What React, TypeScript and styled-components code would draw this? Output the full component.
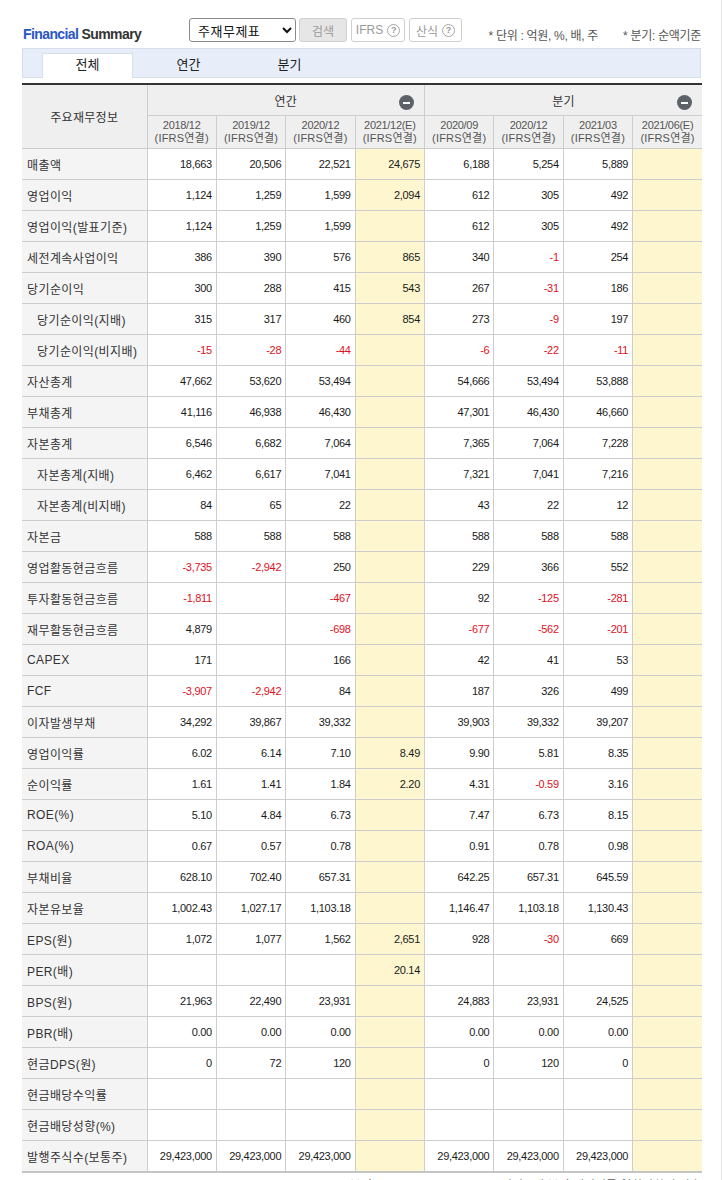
import React from 'react';
import styled, { createGlobalStyle } from 'styled-components';

const GlobalStyle = createGlobalStyle`
  html, body { margin: 0; padding: 0; background: #fff; }
  body { font-family: "Liberation Sans", "Noto Sans CJK KR", sans-serif; color: #333; }
`;

type Row = { label: string; indent?: boolean; values: string[] };

const rows: Row[] = [
  { label: '매출액', values: ['18,663', '20,506', '22,521', '24,675', '6,188', '5,254', '5,889', ''] },
  { label: '영업이익', values: ['1,124', '1,259', '1,599', '2,094', '612', '305', '492', ''] },
  { label: '영업이익(발표기준)', values: ['1,124', '1,259', '1,599', '', '612', '305', '492', ''] },
  { label: '세전계속사업이익', values: ['386', '390', '576', '865', '340', '-1', '254', ''] },
  { label: '당기순이익', values: ['300', '288', '415', '543', '267', '-31', '186', ''] },
  { label: '당기순이익(지배)', indent: true, values: ['315', '317', '460', '854', '273', '-9', '197', ''] },
  { label: '당기순이익(비지배)', indent: true, values: ['-15', '-28', '-44', '', '-6', '-22', '-11', ''] },
  { label: '자산총계', values: ['47,662', '53,620', '53,494', '', '54,666', '53,494', '53,888', ''] },
  { label: '부채총계', values: ['41,116', '46,938', '46,430', '', '47,301', '46,430', '46,660', ''] },
  { label: '자본총계', values: ['6,546', '6,682', '7,064', '', '7,365', '7,064', '7,228', ''] },
  { label: '자본총계(지배)', indent: true, values: ['6,462', '6,617', '7,041', '', '7,321', '7,041', '7,216', ''] },
  { label: '자본총계(비지배)', indent: true, values: ['84', '65', '22', '', '43', '22', '12', ''] },
  { label: '자본금', values: ['588', '588', '588', '', '588', '588', '588', ''] },
  { label: '영업활동현금흐름', values: ['-3,735', '-2,942', '250', '', '229', '366', '552', ''] },
  { label: '투자활동현금흐름', values: ['-1,811', '', '-467', '', '92', '-125', '-281', ''] },
  { label: '재무활동현금흐름', values: ['4,879', '', '-698', '', '-677', '-562', '-201', ''] },
  { label: 'CAPEX', values: ['171', '', '166', '', '42', '41', '53', ''] },
  { label: 'FCF', values: ['-3,907', '-2,942', '84', '', '187', '326', '499', ''] },
  { label: '이자발생부채', values: ['34,292', '39,867', '39,332', '', '39,903', '39,332', '39,207', ''] },
  { label: '영업이익률', values: ['6.02', '6.14', '7.10', '8.49', '9.90', '5.81', '8.35', ''] },
  { label: '순이익률', values: ['1.61', '1.41', '1.84', '2.20', '4.31', '-0.59', '3.16', ''] },
  { label: 'ROE(%)', values: ['5.10', '4.84', '6.73', '', '7.47', '6.73', '8.15', ''] },
  { label: 'ROA(%)', values: ['0.67', '0.57', '0.78', '', '0.91', '0.78', '0.98', ''] },
  { label: '부채비율', values: ['628.10', '702.40', '657.31', '', '642.25', '657.31', '645.59', ''] },
  { label: '자본유보율', values: ['1,002.43', '1,027.17', '1,103.18', '', '1,146.47', '1,103.18', '1,130.43', ''] },
  { label: 'EPS(원)', values: ['1,072', '1,077', '1,562', '2,651', '928', '-30', '669', ''] },
  { label: 'PER(배)', values: ['', '', '', '20.14', '', '', '', ''] },
  { label: 'BPS(원)', values: ['21,963', '22,490', '23,931', '', '24,883', '23,931', '24,525', ''] },
  { label: 'PBR(배)', values: ['0.00', '0.00', '0.00', '', '0.00', '0.00', '0.00', ''] },
  { label: '현금DPS(원)', values: ['0', '72', '120', '', '0', '120', '0', ''] },
  { label: '현금배당수익률', values: ['', '', '', '', '', '', '', ''] },
  { label: '현금배당성향(%)', values: ['', '', '', '', '', '', '', ''] },
  { label: '발행주식수(보통주)', values: ['29,423,000', '29,423,000', '29,423,000', '', '29,423,000', '29,423,000', '29,423,000', ''] },
];

const periods = [
  { date: '2018/12', est: false },
  { date: '2019/12', est: false },
  { date: '2020/12', est: false },
  { date: '2021/12(E)', est: true },
  { date: '2020/09', est: false },
  { date: '2020/12', est: false },
  { date: '2021/03', est: false },
  { date: '2021/06(E)', est: true },
];

const Page = styled.div`
  width: 722px;
  min-height: 100vh;
  box-sizing: border-box;
  border-right: 1px solid #e6e6e6;
  padding: 0 20px 0 22px;
`;

const TopBar = styled.div`
  display: flex;
  align-items: flex-start;
  height: 48px;
  padding-top: 18px;
  box-sizing: border-box;
`;

const Title = styled.h2`
  flex: 0 0 166px;
  margin: 8px 0 0 1px;
  font-size: 14px;
  line-height: 16px;
  font-weight: bold;
  letter-spacing: -0.6px;
  color: #333;
  span { color: #2a56c6; }
`;

const Select = styled.select`
  width: 107px;
  height: 24px;
  border: 1px solid #8a8a8a;
  border-radius: 3px;
  background: #fff;
  font-family: "Noto Sans CJK KR", sans-serif;
  font-size: 13px;
  letter-spacing: 0.5px;
  color: #111;
  padding: 0 4px;
`;

const Btn = styled.button<{ $w: number; $gray?: boolean }>`
  width: ${(p) => p.$w}px;
  height: 24px;
  margin-left: ${(p) => (p.$gray ? 3 : 4)}px;
  border: 1px solid #cfcfcf;
  border-radius: 3px;
  background: ${(p) => (p.$gray ? '#e6e6e6' : '#fff')};
  color: #9a9a9a;
  font-family: "Liberation Sans", "Noto Sans CJK KR", sans-serif;
  font-size: 12px;
  padding: 0;
  display: flex;
  align-items: center;
  justify-content: center;
  gap: 4px;
`;

const Help = styled.span`
  width: 11px;
  height: 11px;
  border: 1px solid #a8a8a8;
  border-radius: 50%;
  font-size: 9px;
  line-height: 11px;
  text-align: center;
  color: #999;
  font-weight: bold;
`;

const Notes = styled.div`
  margin: 11px 0 0 auto;
  display: flex;
  gap: 25px;
  font-size: 12px;
  line-height: 14px;
  color: #555;
  letter-spacing: -0.3px;
`;

const TabBar = styled.div`
  height: 30px;
  box-sizing: border-box;
  background: #e8eef9;
  border: 1px solid #d6deec;
  padding: 4px 0 0 19px;
  display: flex;
  align-items: flex-end;
`;

const Tab = styled.div<{ $active?: boolean }>`
  width: 91px;
  height: 25px;
  margin-right: 10px;
  margin-bottom: -1px;
  box-sizing: border-box;
  border: 1px solid ${(p) => (p.$active ? '#d6deec' : 'transparent')};
  border-bottom: none;
  background: ${(p) => (p.$active ? '#fff' : 'transparent')};
  font-size: 13px;
  line-height: 22px;
  text-align: center;
  color: #222;
`;

const Table = styled.table`
  margin-top: 5px;
  width: 680px;
  table-layout: fixed;
  border-collapse: collapse;
  border-top: 2px solid #333;
  border-bottom: 2px solid #c4c4c4;
  font-size: 12px;
`;

const HeadCell = styled.th<{ $h: number }>`
  position: relative;
  height: ${(p) => p.$h}px;
  padding: 0;
  background: #efefef;
  border: 1px solid #cdcdcd;
  border-top: none;
  font-weight: normal;
  color: #333;
  font-size: 12px;
  letter-spacing: 0.3px;
  &:first-child { border-left: none; }
  &:last-child { border-right: none; }
`;

const PeriodCell = styled(HeadCell)`
  font-size: 11px;
  line-height: 13px;
  color: #555;
  letter-spacing: -0.3px;
  div + div { letter-spacing: 0.2px; }
`;

const Collapse = styled.span`
  position: absolute;
  right: 10px;
  top: 10px;
  width: 15px;
  height: 15px;
  border-radius: 50%;
  background: #5d6168;
  &::after {
    content: '';
    position: absolute;
    left: 4px;
    top: 6.5px;
    width: 7px;
    height: 2px;
    background: #fff;
  }
`;

const LabelCell = styled.th<{ $indent?: boolean }>`
  height: 30px;
  padding: 0 0 0 ${(p) => (p.$indent ? 15 : 5)}px;
  background: #f4f4f4;
  border: 1px solid #cdcdcd;
  border-left: none;
  text-align: left;
  font-weight: normal;
  font-size: 12px;
  letter-spacing: 0.4px;
  color: #333;
  white-space: nowrap;
`;

const ValueCell = styled.td<{ $est?: boolean; $neg?: boolean }>`
  height: 30px;
  padding: 0 4px 0 0;
  background: ${(p) => (p.$est ? '#fdf6cf' : '#fff')};
  border: 1px solid #cdcdcd;
  text-align: right;
  font-size: 11px;
  letter-spacing: -0.3px;
  color: ${(p) => (p.$neg ? '#e0101c' : '#1a1a1a')};
  &:last-child { border-right: none; }
`;

const Footnote = styled.p`
  margin: 3px 0 0;
  text-align: right;
  font-size: 12px;
  color: #555;
`;

export default function App() {
  return (
    <>
      <GlobalStyle />
      <Page>
        <TopBar>
          <Title>
            <span>Financial</span> Summary
          </Title>
          <Select defaultValue="주재무제표">
            <option>주재무제표</option>
            <option>K-IFRS(연결)</option>
          </Select>
          <Btn $w={48} $gray>검색</Btn>
          <Btn $w={54}>
            IFRS <Help>?</Help>
          </Btn>
          <Btn $w={53}>
            산식 <Help>?</Help>
          </Btn>
          <Notes>
            <span>* 단위 : 억원, %, 배, 주</span>
            <span>* 분기: 순액기준</span>
          </Notes>
        </TopBar>

        <TabBar>
          <Tab $active>전체</Tab>
          <Tab>연간</Tab>
          <Tab>분기</Tab>
        </TabBar>

        <Table>
          <colgroup>
            <col style={{ width: 125 }} />
            {periods.map((p, i) => (
              <col key={i} />
            ))}
          </colgroup>
          <thead>
            <tr>
              <HeadCell $h={30} rowSpan={2}>주요재무정보</HeadCell>
              <HeadCell $h={30} colSpan={4}>
                연간
                <Collapse />
              </HeadCell>
              <HeadCell $h={30} colSpan={4}>
                분기
                <Collapse />
              </HeadCell>
            </tr>
            <tr>
              {periods.map((p, i) => (
                <PeriodCell $h={32} key={i}>
                  <div>{p.date}</div>
                  <div>(IFRS연결)</div>
                </PeriodCell>
              ))}
            </tr>
          </thead>
          <tbody>
            {rows.map((r) => (
              <tr key={r.label}>
                <LabelCell $indent={r.indent}>{r.label}</LabelCell>
                {r.values.map((v, i) => (
                  <ValueCell key={i} $est={periods[i].est} $neg={v.startsWith('-')}>
                    {v}
                  </ValueCell>
                ))}
              </tr>
            ))}
          </tbody>
        </Table>
        <Footnote>* 분기 ROE/ROA/PER/PBR은 직전 4개 분기 데이터를 연환산하여 산출</Footnote>
      </Page>
    </>
  );
}
